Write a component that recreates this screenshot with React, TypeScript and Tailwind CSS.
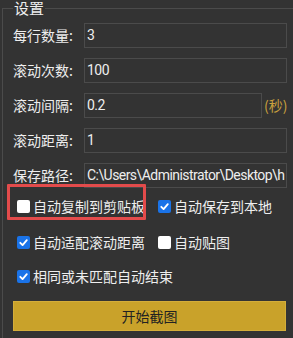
import React from 'react';

const font = { fontFamily: '"Microsoft YaHei", "Noto Sans CJK SC", "Noto Sans", sans-serif' };
const latin = { fontFamily: 'Roboto, "Noto Sans CJK SC", sans-serif' };

const Field: React.FC<{ label: string; value: string; suffix?: string }> = ({ label, value, suffix }) => (
  <div className="flex items-center h-[24px]">
    <span className="w-[71px] shrink-0 text-[14px] text-[#eeeeee] whitespace-nowrap">{label}</span>
    <div className={`h-[25px] border border-[#4b4b4b] bg-[#333333] flex items-center overflow-hidden ${suffix ? 'w-[178px]' : 'w-[203px]'}`}>
      <span className="pl-[2px] text-[14px] tracking-[-0.55px] text-[#eeeeee] whitespace-nowrap" style={latin}>{value}</span>
    </div>
    {suffix && <span className="ml-[2px] text-[14px] text-[#c9a03e] whitespace-nowrap">{suffix}</span>}
  </div>
);

const Check: React.FC<{ label: string; checked?: boolean }> = ({ label, checked }) => (
  <label className="flex items-center gap-[3px] text-[14px] text-[#eeeeee] whitespace-nowrap">
    {checked ? (
      <span className="w-[13px] h-[13px] rounded-[2px] bg-[#1a73e8] flex items-center justify-center">
        <svg width="11" height="11" viewBox="0 0 12 12">
          <path d="M2.5 6.3 L5 8.8 L9.6 3.4" stroke="#fff" strokeWidth="2" fill="none" strokeLinecap="round" strokeLinejoin="round" />
        </svg>
      </span>
    ) : (
      <span className="w-[13px] h-[13px] rounded-[2px] bg-white" />
    )}
    <span>{label}</span>
  </label>
);

export default function App() {
  return (
    <div className="w-[293px] h-[338px] bg-[#333333] overflow-hidden pt-[1px]" style={font}>
      <fieldset className="ml-[2px] w-[300px] h-[340px] border border-[#4b4b4b] pl-[10px]">
        <legend className="ml-0 px-[1px] text-[15px] leading-[14px] text-[#eeeeee]">设置</legend>
        <div className="flex flex-col gap-[11px] pt-[8px]">
          <Field label="每行数量:" value="3" />
          <Field label="滚动次数:" value="100" />
          <Field label="滚动间隔:" value="0.2" suffix="(秒)" />
          <Field label="滚动距离:" value="1" />
          <Field label="保存路径:" value="C:\Users\Administrator\Desktop\h" />
        </div>
        <div className="flex flex-col pl-[4px] mt-[9px]">
          <div className="flex items-center h-[20px]">
            <div className="relative w-[141px]">
              <Check label="自动复制到剪贴板" />
              <span className="absolute left-[-10px] top-[-12px] w-[139px] h-[36px] border-[3px] border-[#e34b4b] rounded-[1px] pointer-events-none" />
            </div>
            <Check label="自动保存到本地" checked />
          </div>
          <div className="flex items-center h-[20px] mt-[16px]">
            <div className="w-[141px]">
              <Check label="自动适配滚动距离" checked />
            </div>
            <Check label="自动贴图" />
          </div>
          <div className="flex items-center h-[20px] mt-[14px]">
            <Check label="相同或未匹配自动结束" checked />
          </div>
        </div>
        <button className="mt-[15px] ml-0 w-[273px] h-[30px] bg-[#c9a22a] border border-[#d4ad3a] text-[14px] text-[#222222]">
          开始截图
        </button>
      </fieldset>
    </div>
  );
}
